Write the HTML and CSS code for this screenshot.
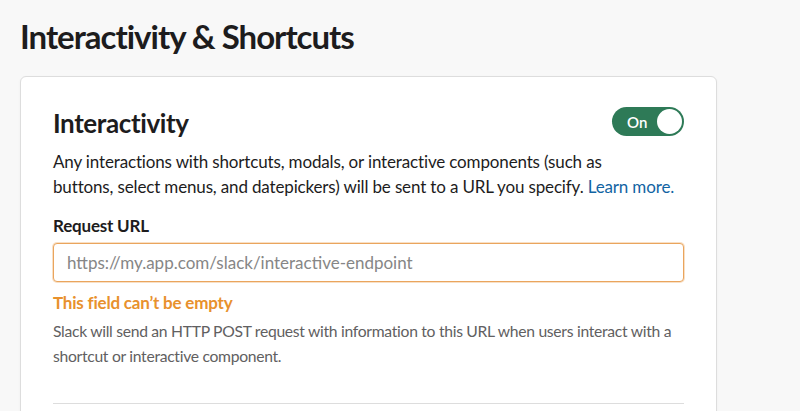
FILE: index.html
```html
<!DOCTYPE html>
<html lang="en">
<head>
    <meta charset="UTF-8">
    <meta name="viewport" content="width=device-width, initial-scale=1.0">
    <title>Interactivity &amp; Shortcuts</title>
    <link rel="stylesheet" href="styles.css">
</head>
<body>
    <div class="page">
        <h1 class="page-title">Interactivity &amp; Shortcuts</h1>

        <div class="card">
            <div class="section-head">
                <h2 class="section-title">Interactivity</h2>
                <button class="toggle is-on" type="button">
                    <span class="toggle-label">On</span>
                    <span class="toggle-knob"></span>
                </button>
            </div>
            <p class="section-desc">
                Any interactions with shortcuts, modals, or interactive components (such as<br>
                buttons, select menus, and datepickers) will be sent to a URL you specify.
                <a href="#" class="link">Learn more.</a>
            </p>

            <div class="field">
                <label class="field-label" for="request-url">Request URL</label>
                <input class="field-input has-error" id="request-url" type="text"
                       placeholder="https://my.app.com/slack/interactive-endpoint">
                <div class="field-error">This field can’t be empty</div>
                <p class="field-hint">
                    Slack will send an HTTP POST request with information to this URL when users interact with a
                    shortcut or interactive component.
                </p>
            </div>

            <hr class="divider">
        </div>
    </div>
</body>
</html>
```

FILE: styles.css
```css
* { box-sizing: border-box; }

body {
    margin: 0;
    background: #f8f8f8;
    color: #1d1c1d;
    font-family: Lato, "Noto Sans", sans-serif;
    overflow: hidden;
}

.page {
    padding: 17px 83px 0 20px;
}

.page-title {
    margin: 0 0 19px;
    font-size: 33px;
    line-height: 1.2;
    font-weight: 700;
    letter-spacing: -1px;
}

.card {
    background: #fff;
    border: 1px solid #dddddd;
    border-radius: 6px;
    box-shadow: 0 1px 3px rgba(0, 0, 0, 0.04);
    padding: 31px 32px 40px;
}

.section-head {
    display: flex;
    align-items: center;
    justify-content: space-between;
}

.section-title {
    margin: 0;
    font-size: 26px;
    line-height: 1.2;
    font-weight: 700;
    letter-spacing: -0.4px;
}

.toggle {
    display: flex;
    align-items: center;
    justify-content: space-between;
    width: 72px;
    height: 29px;
    margin-top: -3px;
    padding: 0 2px 0 15px;
    border: none;
    border-radius: 15px;
    background: #2e7a57;
    cursor: pointer;
}
.toggle-label {
    color: #fff;
    font-family: Lato, sans-serif;
    font-size: 15px;
    font-weight: 600;
}
.toggle-knob {
    width: 25px;
    height: 25px;
    border-radius: 50%;
    background: #fff;
}

.section-desc {
    margin: 10px 0 0;
    font-size: 17px;
    line-height: 25px;
    letter-spacing: -0.15px;
}

.link { color: #1264a3; text-decoration: none; }

.field { margin-top: 14px; }

.field-label {
    display: block;
    font-size: 17px;
    font-weight: 700;
    line-height: 25px;
    letter-spacing: -0.2px;
    margin-bottom: 5px;
}

.field-input {
    display: block;
    width: 100%;
    height: 39px;
    padding: 0 13px;
    border: 1px solid #c4c4c4;
    border-radius: 4px;
    font-family: Lato, sans-serif;
    font-size: 17px;
    color: #1d1c1d;
    outline: none;
}
.field-input::placeholder { color: #868686; }
.field-input.has-error {
    border-color: #eaa55d;
    box-shadow: 0 0 0 1px rgba(234, 165, 93, 0.35);
}

.field-error {
    margin-top: 8px;
    color: #e8912d;
    font-size: 17px;
    font-weight: 700;
    line-height: 25px;
    letter-spacing: -0.2px;
}

.field-hint {
    margin: 4px 0 0;
    color: #616061;
    font-size: 15.7px;
    line-height: 25px;
    letter-spacing: -0.3px;
}

.divider {
    margin: 34px 0 0;
    border: none;
    border-top: 1px solid #dddddd;
}
```
